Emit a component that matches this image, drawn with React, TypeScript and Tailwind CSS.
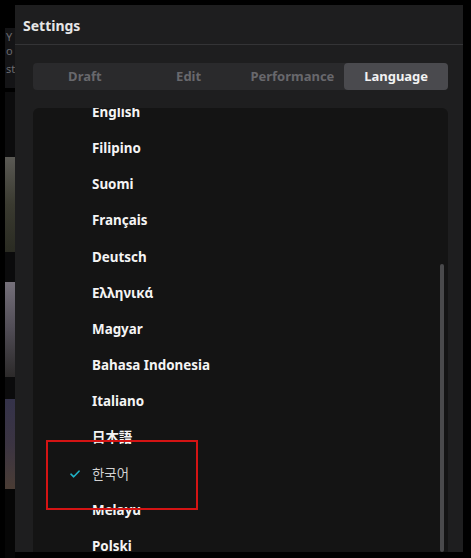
import React from 'react';

const tabs = ['Draft', 'Edit', 'Performance', 'Language'];

const languages = [
  'English',
  'Filipino',
  'Suomi',
  'Français',
  'Deutsch',
  'Ελληνικά',
  'Magyar',
  'Bahasa Indonesia',
  'Italiano',
  '日本語',
  '한국어',
  'Melayu',
  'Polski',
];

const selected = '한국어';

const Check = () => (
  <svg width="10" height="8" viewBox="0 0 10 8" fill="none">
    <path d="M1 4.2 L3.7 6.8 L9 1.2" stroke="#1fb3c7" strokeWidth="1.6" strokeLinecap="round" strokeLinejoin="round" />
  </svg>
);

const App: React.FC = () => {
  return (
    <div
      className="w-[471px] h-[558px] bg-black flex overflow-hidden relative"
      style={{ fontFamily: '"Noto Sans", "Noto Sans CJK KR", "Noto Sans CJK JP", sans-serif' }}
    >
      {/* app peeking out behind the dialog */}
      <div className="w-[15px] shrink-0 flex flex-col pt-[28px] pl-[5px]">
        <div className="h-[60px] bg-[#141416] flex flex-col items-start text-[#6b6b70] text-[11px] leading-[14px] pl-[1px]">
          <span className="mt-[2px]">Y</span>
          <span>o</span>
          <span className="mt-[4px]">st</span>
        </div>
        <div className="h-[65px] mt-[4px] bg-[#0c0c0d]" />
        <div className="h-[95px] bg-gradient-to-b from-[#5b5a55] via-[#3a3a30] to-[#2a2b22]" />
        <div className="h-[30px] bg-[#0b0b0c]" />
        <div className="h-[95px] bg-gradient-to-b from-[#75707a] via-[#504c55] to-[#2c2a2a]" />
        <div className="h-[22px] bg-[#0b0b0c]" />
        <div className="h-[90px] bg-gradient-to-b from-[#34324a] via-[#3b3442] to-[#4a3c34]" />
        <div className="flex-1 bg-[#060606]" />
      </div>

      <div className="mt-[5px] w-[448px] h-[547px] bg-[#1e1e1f] flex flex-col">
        <div className="h-[39px] flex items-center pl-[8px] text-[14px] font-bold text-[#e6e6e6] pt-[1px]">
          Settings
        </div>
        <div className="h-px bg-[#343436]" />

        <div className="pl-[18px] pr-[15px] pt-[18px]">
          <div className="h-[27px] rounded-[4px] bg-[#2a2a2c] grid grid-cols-4">
            {tabs.map((t) => (
              <div
                key={t}
                className={
                  t === 'Language'
                    ? 'flex items-center justify-center rounded-[4px] bg-[#4a4a4e] text-[#f2f2f2] text-[13px] font-bold'
                    : 'flex items-center justify-center text-[#68686c] text-[13px] font-bold'
                }
              >
                {t}
              </div>
            ))}
          </div>
        </div>

        <div className="ml-[18px] mr-[15px] mt-[18px] flex-1 rounded-t-[6px] bg-[#141414] overflow-hidden flex">
          <div className="flex-1 flex flex-col -mt-[14px]">
            {languages.map((lang) => (
              <div key={lang} className="h-[36.17px] shrink-0 flex items-center">
                <div className="w-[59px] shrink-0 flex justify-end pr-[12px]">
                  {lang === selected && <Check />}
                </div>
                <span
                  className={
                    lang === selected
                      ? 'text-[13.4px] text-[#d2d2d2] font-normal'
                      : 'text-[13.4px] text-[#f4f4f4] font-bold'
                  }
                >
                  {lang}
                </span>
              </div>
            ))}
          </div>
          {/* scrollbar */}
          <div className="w-[8px] shrink-0 flex flex-col pt-[156px]">
            <div className="w-[4px] flex-1 rounded-full bg-[#4a4a4c]" />
          </div>
        </div>
      </div>

      <div className="absolute left-[46px] top-[440px] w-[152px] h-[70px] border-2 border-[#d41414]" />
    </div>
  );
};

export default App;
